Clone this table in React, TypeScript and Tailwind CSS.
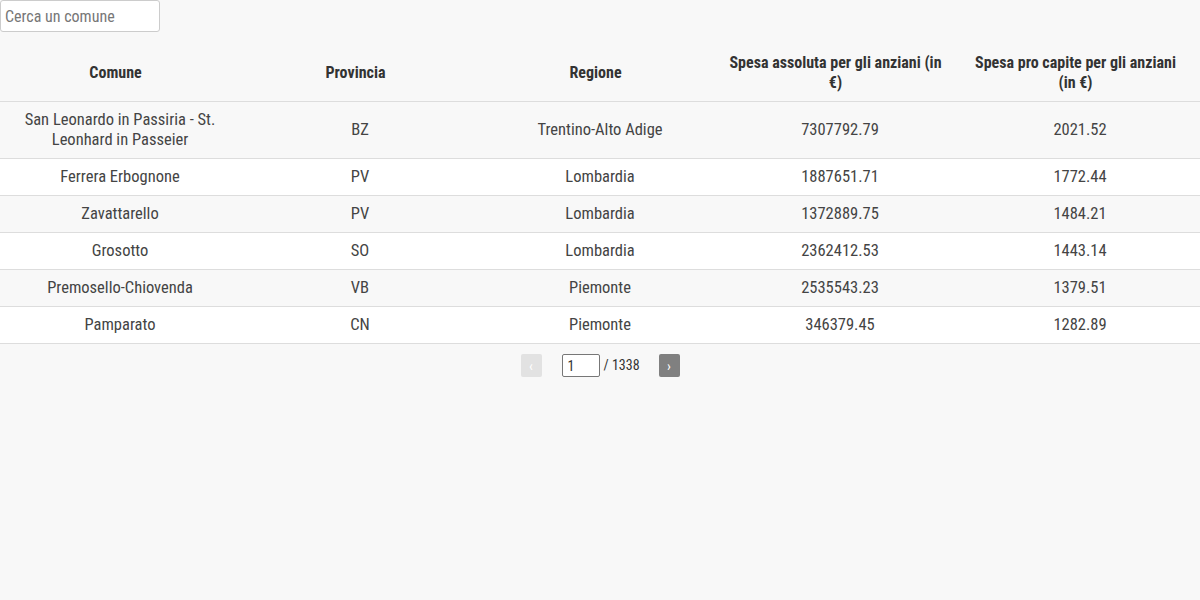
import { useState } from "react";

const rows = [
  ["San Leonardo in Passiria - St. Leonhard in Passeier", "BZ", "Trentino-Alto Adige", "7307792.79", "2021.52"],
  ["Ferrera Erbognone", "PV", "Lombardia", "1887651.71", "1772.44"],
  ["Zavattarello", "PV", "Lombardia", "1372889.75", "1484.21"],
  ["Grosotto", "SO", "Lombardia", "2362412.53", "1443.14"],
  ["Premosello-Chiovenda", "VB", "Piemonte", "2535543.23", "1379.51"],
  ["Pamparato", "CN", "Piemonte", "346379.45", "1282.89"],
];

const headers = [
  "Comune",
  "Provincia",
  "Regione",
  "Spesa assoluta per gli anziani (in €)",
  "Spesa pro capite per gli anziani (in €)",
];

export default function App() {
  const [query, setQuery] = useState("");
  const [page, setPage] = useState("1");

  return (
    <div className="min-h-screen w-full bg-[#f8f8f8] text-[#333] font-['Roboto_Condensed','DejaVu_Sans_Condensed',Roboto,sans-serif] [font-stretch:condensed]">
      <input
        value={query}
        onChange={(e) => setQuery(e.target.value)}
        placeholder="Cerca un comune"
        className="block w-[160px] h-8 px-1 bg-white border border-[#ccc] rounded-[3px] text-[16px] text-[#333] placeholder:text-[#777] outline-none"
      />

      <table className="mt-[10px] w-full border-collapse table-fixed">
        <thead>
          <tr className="border-b border-[#ddd]">
            {headers.map((h) => (
              <th
                key={h}
                className="w-1/5 pl-[7px] pr-[16px] pt-[11px] pb-[8px] text-center text-[16px] leading-5 font-bold text-[#333]"
              >
                {h}
              </th>
            ))}
          </tr>
        </thead>
        <tbody>
          {rows.map((r, i) => (
            <tr
              key={r[0]}
              className={`border-b border-[#ddd] ${i % 2 === 0 ? "bg-[#f8f8f8]" : "bg-white"}`}
            >
              {r.map((c, j) => (
                <td key={j} className="px-4 py-2 text-center text-[16.5px] leading-5 text-[#444]">
                  {c}
                </td>
              ))}
            </tr>
          ))}
        </tbody>
      </table>

      <div className="flex items-center justify-center mt-[10px] text-[14px] text-[#333]">
        <button
          disabled
          className="w-[21px] h-[23px] rounded-[2px] bg-[#e2e2e2] text-white text-[14px] leading-none"
        >
          ‹
        </button>
        <input
          value={page}
          onChange={(e) => setPage(e.target.value)}
          className="ml-5 w-[38px] h-[23px] px-[5px] bg-white border border-[#777] rounded-[2px] text-[14px] outline-none"
        />
        <span className="ml-1 w-[35px] whitespace-nowrap">/ 1338</span>
        <button className="ml-5 w-[21px] h-[23px] rounded-[2px] bg-[#808080] text-white text-[14px] leading-none">
          ›
        </button>
      </div>
    </div>
  );
}
